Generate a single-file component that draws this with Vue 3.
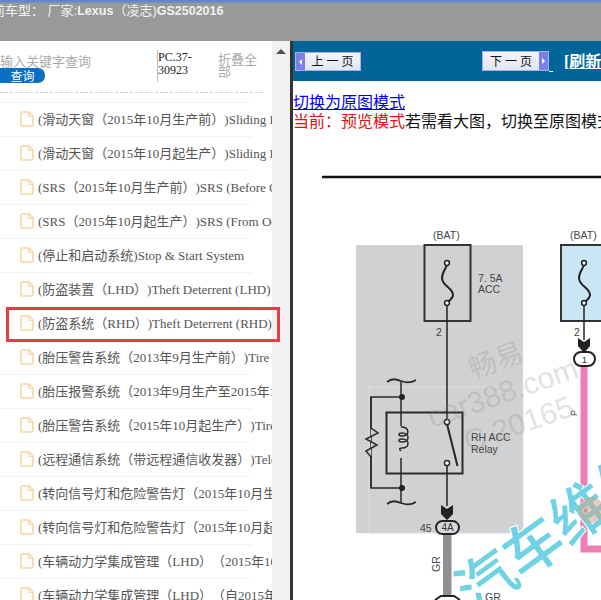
<script setup>
const rows = [
  '(滑动天窗（2015年10月生产前）)Sliding Roof',
  '(滑动天窗（2015年10月起生产）)Sliding Roof',
  '(SRS（2015年10月生产前）)SRS (Before October 2015)',
  '(SRS（2015年10月起生产）)SRS (From October 2015)',
  '(停止和启动系统)Stop & Start System',
  '(防盗装置（LHD）)Theft Deterrent (LHD)',
  '(防盗系统（RHD）)Theft Deterrent (RHD)',
  '(胎压警告系统（2013年9月生产前）)Tire Pressure',
  '(胎压报警系统（2013年9月生产至2015年10月）)Tire',
  '(胎压警告系统（2015年10月起生产）)Tire Pressure',
  '(远程通信系统（带远程通信收发器）)Telematics',
  '(转向信号灯和危险警告灯（2015年10月生产前）)',
  '(转向信号灯和危险警告灯（2015年10月起生产）)',
  '(车辆动力学集成管理（LHD）（2015年10月）)',
  '(车辆动力学集成管理（LHD）（自2015年10月）)'
]
</script>

<template>
  <div class="page">
    <header class="topbar">
      <div class="strip"></div>
      <div class="title">当前车型： 厂家:<b>Lexus</b>（凌志)<b>GS2502016</b></div>
    </header>
    <div class="main">
      <aside class="left">
        <div class="content">
          <div class="search">
            <div class="query">
              <span class="placeholder">输入关键字查询</span>
              <span class="btn">查询</span>
            </div>
            <div class="code">PC.37-30923</div>
            <div class="fold">折叠全部</div>
          </div>
          <ul class="list">
            <li v-for="r in rows" :key="r" class="row">
              <svg class="doc" width="14" height="16" viewBox="0 0 14 16">
                <path d="M1 2.2a1.2 1.2 0 0 1 1.2-1.2H9l4 4v8.8a1.2 1.2 0 0 1-1.2 1.2H2.2A1.2 1.2 0 0 1 1 13.8z" fill="#fffdf9" stroke="#f7d6a8" stroke-width="1.6"/>
                <path d="M8.6 1v4.4H13" fill="none" stroke="#f7d6a8" stroke-width="1.4"/>
              </svg>
              <span class="label">{{ r }}</span>
            </li>
          </ul>
        </div>
        <div class="scroll"><i class="up"></i></div>
        <div class="mark"></div>
      </aside>
      <section class="right">
        <div class="nav">
          <a class="pg prev"><i class="cap"><em></em></i><span>上 一 页</span></a>
          <a class="pg next"><span>下 一 页</span><i class="cap"><em></em></i></a>
          <a class="tail"></a>
          <a class="refresh">[刷新当前页]</a>
        </div>
        <div class="body">
          <div class="lines">
            <div><a class="switch">切换为原图模式</a></div>
            <div class="note"><span class="red">当前：预览模式</span>若需看大图，切换至原图模式查看</div>
          </div>
          <svg class="diagram" viewBox="293 135 308 465" width="308" height="465">
            <line x1="322" y1="177" x2="601" y2="177" stroke="#111" stroke-width="2.4"/>
            <rect x="356" y="245" width="167" height="288" fill="#d0d1d3"/>
            <rect x="369" y="387" width="154" height="146" fill="none" stroke="#dcdde0" stroke-width="1"/>

            <g font-family="'Liberation Sans',sans-serif" font-size="10.5" fill="#444">
              <text x="433" y="239">(BAT)</text>
              <text x="570" y="239">(BAT)</text>
              <text x="478" y="282">7. 5A</text>
              <text x="478" y="293">ACC</text>
              <text x="436" y="336">2</text>
              <text x="574" y="336">2</text>
              <text x="471" y="441">RH ACC</text>
              <text x="471" y="453">Relay</text>
              <text x="420" y="532">45</text>
              <text x="485" y="601">GR</text>
              <text transform="translate(440 572) rotate(-90)">GR</text>
              <text transform="translate(577 416) rotate(-90)" font-size="9">P</text>
            </g>

            <rect x="424.5" y="245" width="46" height="76" fill="#d0d1d3" stroke="#333" stroke-width="2"/>
            <rect x="561" y="245" width="60" height="76" fill="#c8e6f6" stroke="#333" stroke-width="2"/>
            <g fill="none" stroke="#222" stroke-width="1.5">
              <path d="M447 265c-2 5-5 8-5 13 0 8 11 10 11 17 0 3-3 5-6 8" stroke-width="2"/>
              <path d="M584 265c-2 5-5 8-5 13 0 8 11 10 11 17 0 3-3 5-6 8" stroke-width="2"/>
              <circle cx="447" cy="263" r="2.4" fill="#fff"/>
              <circle cx="447" cy="303" r="2.4" fill="#fff"/>
              <circle cx="584" cy="263" r="2.4" fill="#e6f4fb"/>
              <circle cx="584" cy="303" r="2.4" fill="#e6f4fb"/>
              <path d="M447 305.500V420M447 466V506"/>
              <path d="M584 305.500V340"/>
            </g>

            <path d="M578 338l6 4 6-4v8l-6 7-6-7z" fill="#222"/>
            <rect x="574" y="352" width="21" height="14" rx="7" fill="#fff" stroke="#222" stroke-width="2"/>
            <text x="584.500" y="363" font-size="9.500" text-anchor="middle" fill="#333" font-family="'Liberation Sans',sans-serif">1</text>
            <path d="M584 367V549H601" fill="none" stroke="#ee7cb5" stroke-width="7"/>

            <g fill="none" stroke="#2a2a2a" stroke-width="1.5">
              <rect x="386.500" y="412.500" width="76" height="61" stroke-width="2"/>
              <path d="M387 382c5-4 9-3 14-1s10 2 15-1" stroke-width="1.8"/>
              <path d="M387 504c5-4 9-3 14-1s10 2 15-1" stroke-width="1.8"/>
              <path d="M401 382V426M401 458V503"/>
              <path d="M401 427c9 0 9 9 1 9 -4 0-4-3 0-3 8 0 8 9 0 9 -4 0-4-3 0-3 8 0 8 9 0 9 -4 0-2 2-1 3"/>
              <path d="M401 397H371V488H401"/>
              <path d="M371 397V428L378 433L366 439L377 445L366 451L371 457V488" fill="#d0d1d3"/>
              <path d="M447 424L457.500 466" stroke-width="2"/>
              <circle cx="447" cy="422" r="2.600" fill="#fff"/>
              <circle cx="447" cy="463" r="2.600" fill="#fff"/>
            </g>
            <circle cx="402" cy="397" r="3" fill="#222"/>
            <circle cx="402" cy="488" r="3" fill="#222"/>

            <rect x="443" y="533" width="8.500" height="67" fill="#8f9092"/>
            <path d="M441 505l6 4 6-4v9l-6 6-6-6z" fill="#222"/>
            <rect x="436" y="521" width="23" height="13" rx="6.500" fill="#d7d8da" stroke="#222" stroke-width="2"/>
            <text x="447.500" y="531" font-size="10" text-anchor="middle" fill="#333" font-family="'Liberation Sans',sans-serif">4A</text>
            <path d="M435 600l6-4h13l6 4" fill="#fff" stroke="#222" stroke-width="2"/>

            <g font-family="'Liberation Sans','Noto Sans CJK SC',sans-serif" fill="#8a8a8a" fill-opacity=".25">
              <text transform="translate(473 379) rotate(-20)" font-size="28" font-family="'Noto Sans CJK SC',sans-serif">畅易</text>
              <text transform="translate(432 428) rotate(-19)" font-size="30">car388.com</text>
              <text transform="translate(468 452) rotate(-19)" font-size="30">C 20165</text>
            </g>

            <g font-family="'Noto Sans CJK SC',sans-serif" font-size="58" font-weight="500" fill="#6fd3e5" stroke="#fff" stroke-width="2" paint-order="stroke">
              <text transform="translate(475 615) rotate(-36)">汽车维修</text>
            </g>
            <circle cx="591" cy="510" r="13" fill="#c9a58c" fill-opacity=".55"/>
          </svg>
        </div>
      </section>
    </div>
  </div>
</template>

<style scoped>
.page {
  width: 601px;
  height: 600px;
  overflow: hidden;
  display: flex;
  flex-direction: column;
  background: #fff;
  font-family: "Liberation Serif", "Noto Sans CJK SC", serif;
  text-spacing-trim: space-all;
}
.topbar {
  height: 41px;
  flex: none;
  background: #999;
  overflow: hidden;
}
.strip {
  height: 3px;
  background: linear-gradient(#5f7fd0, #7c8fc0);
}
.title {
  margin-left: -21px;
  height: 16px;
  line-height: 16px;
  font-family: "Liberation Sans", "Noto Sans CJK SC", sans-serif;
  font-size: 13px;
  color: #f2f2f2;
  white-space: pre;
}
.title b {
  font-size: 12.5px;
  font-family: "Liberation Sans", sans-serif;
}
.main {
  flex: 1;
  min-height: 0;
  display: grid;
  grid-template-columns: 290px 1fr;
}
.left {
  position: relative;
  display: flex;
  min-width: 0;
}
.content {
  width: 272px;
  overflow: hidden;
  flex: none;
}
.search {
  height: 52px;
  position: relative;
  display: flex;
  align-items: flex-start;
  padding-top: 9px;
  box-sizing: border-box;
  width: 263px;
  border-bottom: 1px dashed #ccc;
}
.query {
  width: 157px;
  flex: none;
  display: flex;
  flex-direction: column;
}
.placeholder {
  font-size: 13px;
  line-height: 17px;
  color: #aaa;
  font-family: "Noto Sans CJK SC", sans-serif;
  white-space: nowrap;
  margin-top: 2px;
}
.btn {
  width: 45px;
  height: 15px;
  line-height: 15px;
  margin-top: -1px;
  text-align: center;
  font-size: 12px;
  color: #fff;
  background: #0b6fc4;
  border-radius: 0 7px 7px 0;
  font-family: "Noto Sans CJK SC", sans-serif;
}
.code {
  width: 61px;
  flex: none;
  box-sizing: border-box;
  height: 32px;
  border-left: 1px solid #bbb;
  font-size: 12px;
  line-height: 13px;
  padding-top: 1px;
  color: #222;
}
.fold {
  width: 40px;
  font-size: 13px;
  line-height: 12px;
  padding-top: 3px;
  color: #aaa;
  font-family: "Noto Sans CJK SC", sans-serif;
}
.list {
  margin: 9px 0 0;
  padding: 0;
  list-style: none;
}
.row {
  height: 34px;
  box-sizing: border-box;
  position: relative;
  display: flex;
  align-items: center;
  padding-left: 20px;
  padding-bottom: 2px;
  border-top: 1px solid #f3f3f3;
  width: 272px;
  white-space: nowrap;
  font-size: 13px;
  color: #555;
}
.row::after {
  content: "";
  position: absolute;
  top: -1px;
  left: 252px;
  width: 20px;
  height: 1px;
  background: #fff;
}
.doc { flex: none; margin-right: 4px; }
.label { flex: none; }
.scroll {
  width: 18px;
  flex: none;
  background: #f1f1f1;
  position: relative;
}
.up {
  position: absolute;
  left: 4px;
  top: 8px;
  border: 5px solid transparent;
  border-top: 0;
  border-bottom: 5px solid #505050;
}
.mark {
  position: absolute;
  left: 6px;
  top: 266px;
  width: 274px;
  height: 35px;
  box-sizing: border-box;
  border: 3px solid #e04043;
}
.right {
  min-width: 0;
  border-left: 3px solid #333;
  overflow: hidden;
  display: flex;
  flex-direction: column;
}
.nav {
  height: 40px;
  flex: none;
  background: #006699;
  display: flex;
  align-items: flex-start;
  white-space: nowrap;
  padding-left: 2px;
}
.pg {
  display: flex;
  height: 19px;
  margin-top: 11px;
  font-size: 12px;
  line-height: 19px;
  color: #111;
  background: linear-gradient(#f2f3fc, #e2e6f7);
  border: 1px solid #a8b0e0;
  box-sizing: border-box;
  flex: none;
}
.pg span { flex: 1; text-align: center; }
.prev { width: 66px; }
.next { width: 67px; height: 20px; margin-top: 10px; margin-left: 121px; line-height: 20px; }
.cap {
  width: 9px;
  background: #7b7fe8;
  display: flex;
  align-items: center;
  justify-content: center;
}
.cap em {
  display: block;
  border: 3px solid transparent;
}
.prev .cap em { border-right-color: #fff; margin-left: -3px; }
.next .cap em { border-left-color: #fff; margin-right: -3px; }
.tail {
  width: 4px;
  height: 1px;
  margin-top: 30px;
  background: #fff;
  flex: none;
}
.refresh {
  margin-left: 11px;
  margin-top: 11px;
  font-size: 16px;
  line-height: 20px;
  font-weight: 700;
  color: #fff;
  text-decoration: underline;
  flex: none;
}
.body {
  flex: 1;
  min-height: 0;
  display: flex;
  flex-direction: column;
  overflow: hidden;
}
.lines {
  padding-top: 12px;
  height: 54px;
  box-sizing: border-box;
  font-size: 16px;
  line-height: 19px;
  white-space: nowrap;
  flex: none;
  color: #111;
}
.switch { color: #0000ee; text-decoration: underline; }
.red { color: #e01010; }
.diagram { display: block; flex: none; }
</style>

<style>
html, body { margin: 0; overflow: hidden; background: #fff; }
</style>
